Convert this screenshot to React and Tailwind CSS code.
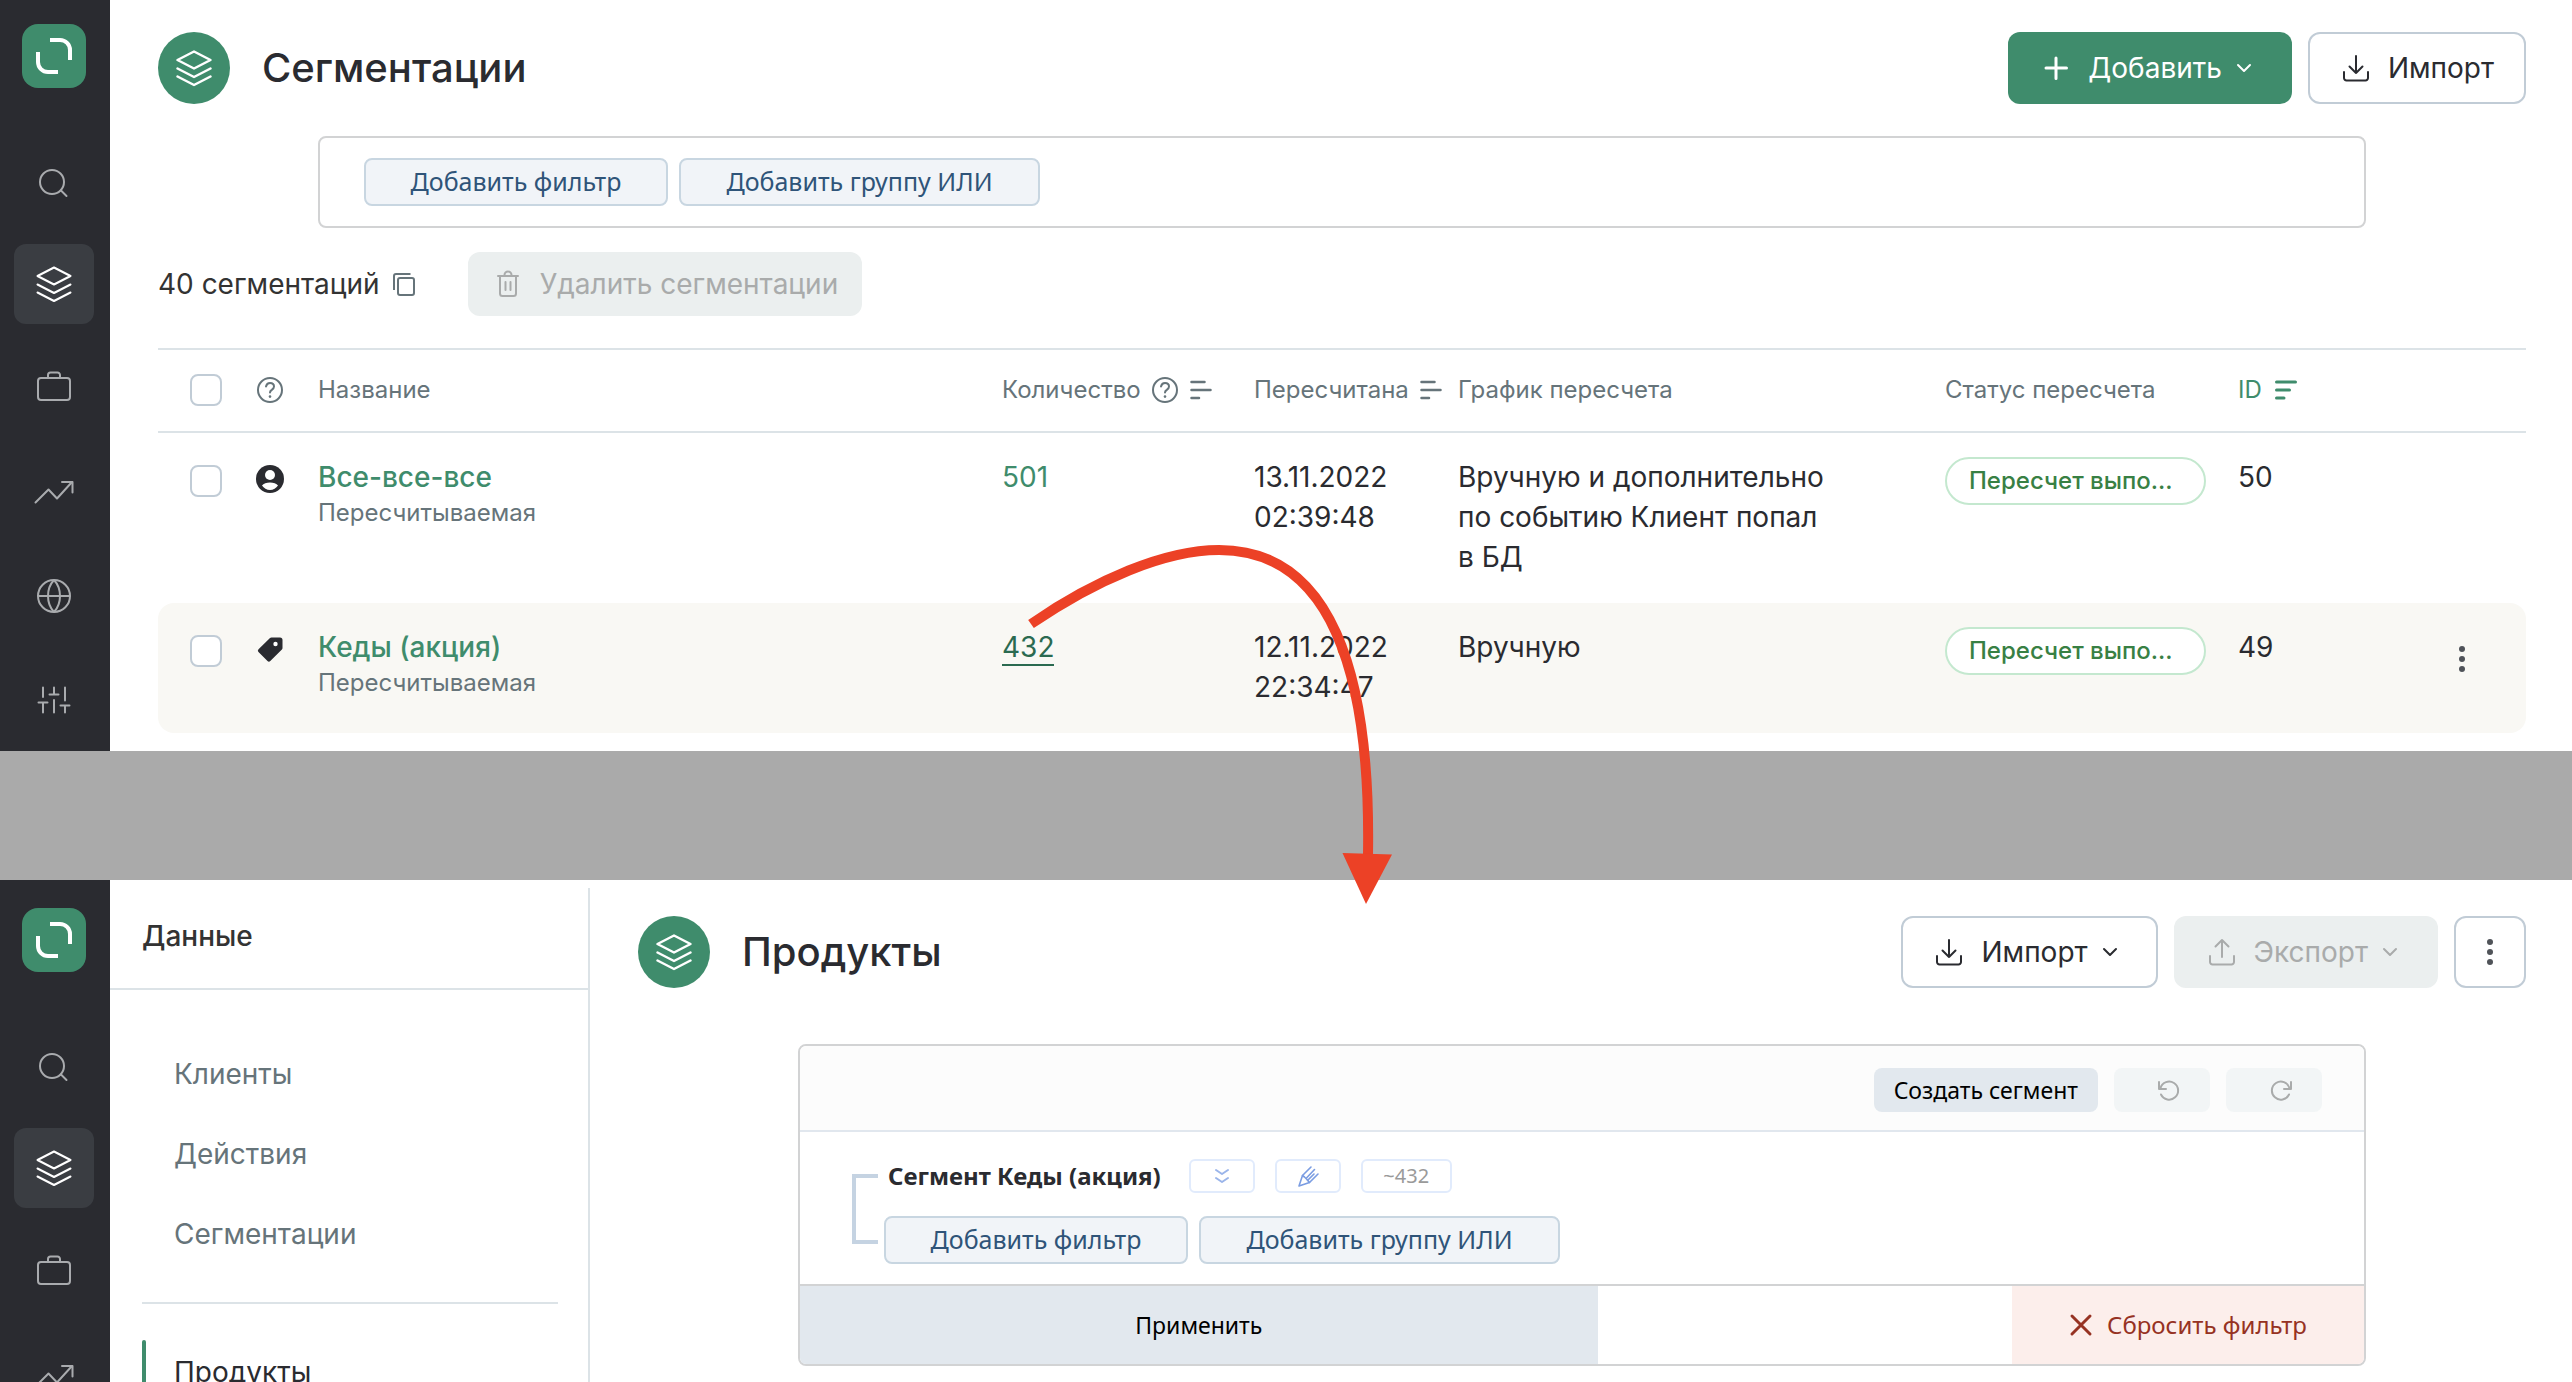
import React, { useState } from 'react';

const LayersIcon = ({ strokeWidth = 2 }) => (
    <svg viewBox="0 0 40 40" className="w-10 h-10" fill="none" stroke="currentColor" strokeWidth={strokeWidth} strokeLinecap="round" strokeLinejoin="round">
        <path d="M20 3.5 36.5 12 20 20.5 3.5 12Z" />
        <path d="M3.5 20.5 20 29l16.5-8.5" />
        <path d="M3.5 28.5 20 37l16.5-8.5" />
    </svg>
);

const SearchIcon = () => (
    <svg viewBox="0 0 40 40" className="w-10 h-10" fill="none" stroke="currentColor" strokeWidth="2" strokeLinecap="round">
        <circle cx="18" cy="22" r="12" />
        <path d="m27 30.5 5.5 5.5" />
    </svg>
);

const BriefcaseIcon = () => (
    <svg viewBox="0 0 40 40" className="w-10 h-10" fill="none" stroke="currentColor" strokeWidth="2">
        <rect x="4" y="10" width="32" height="22" rx="3" />
        <path d="M14 10V7a2.5 2.5 0 0 1 2.5-2.5h7A2.5 2.5 0 0 1 26 7v3" />
    </svg>
);

const TrendIcon = () => (
    <svg viewBox="0 0 40 40" className="w-10 h-10" fill="none" stroke="currentColor" strokeWidth="2" strokeLinecap="round" strokeLinejoin="round">
        <path d="M1.5 30.5 14.5 17.5 23 26.5 38 10" />
        <path d="M28 10h10.5v10.5" />
    </svg>
);

const GlobeIcon = () => (
    <svg viewBox="0 0 40 40" className="w-10 h-10" fill="none" stroke="currentColor" strokeWidth="2">
        <circle cx="20" cy="20" r="16" />
        <path d="M4 20h32M20 4c-8 8.5-8 23.5 0 32M20 4c8 8.5 8 23.5 0 32" />
    </svg>
);

const SlidersIcon = () => (
    <svg viewBox="0 0 40 40" className="w-10 h-10" fill="none" stroke="currentColor" strokeWidth="2" strokeLinecap="round">
        <path d="M9 7.5v9.5M4.5 22.5h9M9 22.5v10" />
        <path d="M20 7.5v7M15.5 14.5h9M20 20v12.5" />
        <path d="M31 7.5v13M26.5 25.5h9M31 25.5v7" />
    </svg>
);

const LogoIcon = () => (
    <svg viewBox="0 0 64 64" className="w-16 h-16" fill="none" stroke="#fff" strokeWidth="4">
        <path d="M28 16h10a10 10 0 0 1 10 10v10" />
        <path d="M16 28v10a10 10 0 0 0 10 10h10" />
    </svg>
);

const DownloadIcon = () => (
    <svg viewBox="0 0 32 32" className="w-8 h-8" fill="none" stroke="currentColor" strokeWidth="2" strokeLinecap="round" strokeLinejoin="round">
        <path d="M16 4v17M9.5 14.5 16 21l6.5-6.5" />
        <path d="M4 20v6a2.5 2.5 0 0 0 2.5 2.5h19A2.5 2.5 0 0 0 28 26v-6" />
    </svg>
);

const UploadIcon = () => (
    <svg viewBox="0 0 32 32" className="w-8 h-8" fill="none" stroke="currentColor" strokeWidth="2" strokeLinecap="round" strokeLinejoin="round">
        <path d="M16 21V4M9.5 10.5 16 4l6.5 6.5" />
        <path d="M4 20v6a2.5 2.5 0 0 0 2.5 2.5h19A2.5 2.5 0 0 0 28 26v-6" />
    </svg>
);

const ChevronIcon = () => (
    <svg viewBox="0 0 32 32" className="w-8 h-8" fill="none" stroke="currentColor" strokeWidth="2" strokeLinecap="round" strokeLinejoin="round">
        <path d="m10 13 6 6 6-6" />
    </svg>
);

const PlusIcon = () => (
    <svg viewBox="0 0 32 32" className="w-8 h-8" stroke="currentColor" strokeWidth="3" strokeLinecap="round">
        <path d="M16 6v20.5M6 16h20.5" />
    </svg>
);

const TrashIcon = () => (
    <svg viewBox="0 0 32 32" className="w-8 h-8" fill="none" stroke="currentColor" strokeWidth="2" strokeLinecap="round">
        <path d="M6 8h20M12.5 8V7a3.5 3.5 0 0 1 7 0v1" />
        <path d="M8 8v17.5A2.5 2.5 0 0 0 10.5 28h11a2.5 2.5 0 0 0 2.5-2.5V8M13.5 14v8M18.5 14v8" />
    </svg>
);

const CopyIcon = () => (
    <svg viewBox="0 0 24 24" className="w-6 h-6" fill="none" stroke="currentColor" strokeWidth="2">
        <rect x="6" y="6" width="16" height="17" rx="2" />
        <path d="M2 18V4a2 2 0 0 1 2-2h14.5" />
    </svg>
);

const HelpIcon = () => (
    <svg viewBox="0 0 28 28" className="w-7 h-7 shrink-0" fill="none" stroke="currentColor" strokeWidth="2" strokeLinecap="round">
        <circle cx="14" cy="14" r="12" />
        <path d="M10 10.5C10.5 8.2 12 7 14 7c2.3 0 4 1.5 4 3.5 0 1.7-1 2.5-2.2 3.4-1.2.8-1.8 1.4-1.8 2.6" />
        <path d="M14 20.5v.1" strokeWidth="2.6" />
    </svg>
);

const SortIcon = ({ active = false }) => (
    <svg viewBox="0 0 24 24" className="w-6 h-6 shrink-0" stroke="currentColor" strokeWidth={active ? 3 : 2.5} strokeLinecap="round">
        <path d={active ? 'M2.5 4h19M2.5 12h13M2.5 20h7.5' : 'M2.5 4h13M2.5 12h19M2.5 20h7.5'} />
    </svg>
);

const PersonIcon = () => (
    <svg viewBox="0 0 28 28" className="w-7 h-7">
        <circle cx="14" cy="14" r="14" fill="currentColor" />
        <circle cx="14" cy="10" r="5" fill="#fff" />
        <path d="M6 20.5c1.5-2 4.5-3 8-3s6.5 1 8 3c-1.8 2.7-4.7 4.5-8 4.5s-6.200-1.800-8-4.500Z" fill="#fff" />
    </svg>
);

const TagIcon = () => (
    <svg viewBox="0 0 28 28" className="w-7 h-7">
        <path d="M15.5 2.500h8.500a2.500 2.500 0 0 1 2.500 2.500v8a2 2 0 0 1-.6 1.500L14.300 26a2 2 0 0 1-2.800 0L2.500 17a2 2 0 0 1 0-2.800L14 3.100a2 2 0 0 1 1.500-.6Z" fill="currentColor" />
        <circle cx="19.5" cy="9" r="2.2" fill="#fff" />
    </svg>
);

const DotsIcon = () => (
    <svg viewBox="0 0 32 32" className="w-8 h-8" fill="currentColor">
        <circle cx="16" cy="6" r="3" />
        <circle cx="16" cy="16" r="3" />
        <circle cx="16" cy="26" r="3" />
    </svg>
);

const RotateIcon = ({ redo = false }) => (
    <svg viewBox="0 0 24 24" className="w-6 h-6" fill="none" stroke="currentColor" strokeWidth="2" strokeLinecap="round" strokeLinejoin="round">
        {redo ? (
            <>
                <path d="M22 4v7h-7" />
                <path d="M20.5 10A9 9 0 1 0 20 16.5" />
            </>
        ) : (
            <>
                <path d="M2 4v7h7" />
                <path d="M3.5 10A9 9 0 1 1 4 16.5" />
            </>
        )}
    </svg>
);

const DoubleChevronIcon = () => (
    <svg viewBox="0 0 20 20" className="w-5 h-5" fill="none" stroke="currentColor" strokeWidth="2" strokeLinecap="round" strokeLinejoin="round">
        <path d="m4 4 6 4 6-4M4 12l6 4 6-4" />
    </svg>
);

const PencilIcon = () => (
    <svg viewBox="0 0 24 24" className="w-6 h-6" fill="none" stroke="currentColor" strokeWidth="1.6" strokeLinecap="round" strokeLinejoin="round">
        <path d="M15 3 6.5 11.5 3 22l10.5-3.5L22 10" />
        <path d="M18.5 5.5 10 14.5M6.5 11.5l2 1.5 1.5 1.5 1.5 1.5 2 2.500" />
        <path d="m18 10-6.5 6.5" />
    </svg>
);

const CloseIcon = () => (
    <svg viewBox="0 0 24 24" className="w-6 h-6" stroke="currentColor" strokeWidth="3" strokeLinecap="round">
        <path d="m3 3 18 18M21 3 3 21" />
    </svg>
);

const navItems = [
    { label: 'Поиск', Icon: SearchIcon },
    { label: 'Данные', Icon: LayersIcon, active: true },
    { label: 'Кампании', Icon: BriefcaseIcon },
    { label: 'Отчеты', Icon: TrendIcon },
    { label: 'Сайт', Icon: GlobeIcon },
    { label: 'Настройки', Icon: SlidersIcon }
];

const segments = [
    {
        id: 50,
        name: 'Все-все-все',
        Icon: PersonIcon,
        count: 501,
        date: '13.11.2022',
        time: '02:39:48',
        schedule: 'Вручную и дополнительно по событию Клиент попал в БД'
    },
    {
        id: 49,
        name: 'Кеды (акция)',
        Icon: TagIcon,
        count: 432,
        date: '12.11.2022',
        time: '22:34:47',
        schedule: 'Вручную',
        hovered: true
    }
];

const Sidebar = ({ className }) => (
    <nav className={`w-[110px] shrink-0 bg-[#2a2b30] pr-0.5 flex flex-col items-center text-[#a9abae] ${className}`}>
        <a href="#home" aria-label="Главная" className="mb-[52px] rounded-2xl bg-[#3f8c6c]">
            <LogoIcon />
        </a>
        <div className="flex flex-col gap-6">
            {navItems.map(({ label, Icon, active }) => (
                <a
                    key={label}
                    href="#nav"
                    aria-label={label}
                    className={`w-20 h-20 rounded-xl flex items-center justify-center ${active ? 'bg-[#3a3d42] text-white' : ''}`}
                >
                    <Icon />
                </a>
            ))}
        </div>
    </nav>
);

const PageTitle = ({ children }) => (
    <div className="flex items-center gap-8">
        <span className="w-18 h-18 rounded-full bg-[#3f8c6c] text-white flex items-center justify-center">
            <LayersIcon strokeWidth={2.5} />
        </span>
        <h1 className="text-[40px] leading-[48px] font-medium">{children}</h1>
    </div>
);

const outlineButton = 'h-18 rounded-xl border-2 border-[#c1ccd6] bg-white flex items-center';

const FilterButtons = () => (
    <div className="flex gap-[11px] text-[25px] font-['Noto_Sans',sans-serif] text-[#2f5479]">
        <button className="h-12 w-[304px] rounded-lg border-2 border-[#c8d6e1] bg-[#f1f4f8]">Добавить фильтр</button>
        <button className="h-12 w-[361px] rounded-lg border-2 border-[#c8d6e1] bg-[#f1f4f8]">Добавить группу ИЛИ</button>
    </div>
);

const Checkbox = ({ label, ...props }) => (
    <input
        type="checkbox"
        aria-label={label}
        className="block w-8 h-8 appearance-none rounded-lg border-2 border-[#c1ccd6] bg-white checked:bg-[#3f8c6c]"
        {...props}
    />
);

const SegmentsTable = () => {
    const [selected, setSelected] = useState([]);

    const toggle = (id) => {
        setSelected(selected.includes(id) ? selected.filter((s) => s !== id) : [...selected, id]);
    };

    const toggleAll = () => {
        setSelected(selected.length === segments.length ? [] : segments.map((s) => s.id));
    };

    return (
        <table className="mt-8 w-full table-fixed border-separate border-spacing-0 text-left">
            <colgroup>
                <col className="w-[98px]" />
                <col className="w-[62px]" />
                <col />
                <col className="w-[252px]" />
                <col className="w-[204px]" />
                <col className="w-[487px]" />
                <col className="w-[293px]" />
                <col className="w-[160px]" />
                <col className="w-[128px]" />
            </colgroup>
            <thead>
                <tr className="text-2xl text-[#66747a] [&>th]:h-[85px] [&>th]:border-y-2 [&>th]:border-[#dce3e7] [&>th]:pb-0.5 [&>th]:font-normal">
                    <th className="pl-8">
                        <Checkbox label="Выбрать все" checked={selected.length === segments.length} onChange={toggleAll} />
                    </th>
                    <th><HelpIcon /></th>
                    <th>Название</th>
                    <th>
                        <div className="flex items-center gap-2.5">Количество <HelpIcon /> <SortIcon /></div>
                    </th>
                    <th>
                        <div className="flex items-center gap-2.5">Пересчитана <SortIcon /></div>
                    </th>
                    <th>График пересчета</th>
                    <th>Статус пересчета</th>
                    <th>
                        <div className="flex items-center gap-3 text-[#3f8c6c]">ID <SortIcon active /></div>
                    </th>
                    <th></th>
                </tr>
            </thead>
            <tbody>
                {segments.map(({ id, name, Icon, count, date, time, schedule, hovered }) => (
                    <tr
                        key={id}
                        className={`align-top text-[28px] leading-10 [&>td]:pt-6 [&>td]:pb-[26px] ${hovered ? '[&>td]:bg-[#f9f8f4]' : ''}`}
                    >
                        <td className="rounded-l-2xl pl-8">
                            <div className="pt-2">
                                <Checkbox label={name} checked={selected.includes(id)} onChange={() => toggle(id)} />
                            </div>
                        </td>
                        <td>
                            <div className="pt-2"><Icon /></div>
                        </td>
                        <td>
                            <a href="#segment" className="block font-medium text-[#3f8c6c]">{name}</a>
                            <div className="text-2xl leading-8 text-[#66747a]">Пересчитываемая</div>
                        </td>
                        <td>
                            <a href="#products" className={hovered ? 'border-b-2 border-[#2b6a50] text-[#2b6a50]' : 'text-[#3f8c6c]'}>
                                {count}
                            </a>
                        </td>
                        <td>{date}<br />{time}</td>
                        <td className="pr-[104px]">{schedule}</td>
                        <td>
                            <span className="flex h-12 w-[261px] items-center rounded-full border-2 border-[#c4e8cf] bg-white px-[22px] text-2xl font-medium text-[#388044]">
                                Пересчет выпо...
                            </span>
                        </td>
                        <td>{id}</td>
                        <td className="rounded-r-2xl pr-8">
                            {hovered && (
                                <button aria-label="Действия" className="ml-auto flex h-16 w-16 items-center justify-center text-[#505359]">
                                    <DotsIcon />
                                </button>
                            )}
                        </td>
                    </tr>
                ))}
            </tbody>
        </table>
    );
};

const SegmentsPage = () => (
    <section className="flex shrink-0 bg-white">
        <Sidebar className="pt-6 pb-[11px]" />
        <main className="min-w-0 flex-1 pt-8 pr-[46px] pl-12">
            <header className="flex items-center justify-between">
                <PageTitle>Сегментации</PageTitle>
                <div className="flex gap-4 text-[28px]">
                    <button className="h-18 rounded-xl bg-[#3f8c6c] px-8 text-white flex items-center">
                        <PlusIcon />
                        <span className="ml-4 mr-1.5">Добавить</span>
                        <ChevronIcon />
                    </button>
                    <button className={`${outlineButton} gap-4 px-[30px]`}>
                        <DownloadIcon /> Импорт
                    </button>
                </div>
            </header>

            <div className="mx-40 mt-8 rounded-lg border-2 border-[#d2d3d4] px-11 py-5">
                <FilterButtons />
            </div>

            <div className="mt-6 flex items-center text-[28px]">
                <span className="text-[#333]">40 сегментаций</span>
                <button aria-label="Скопировать" className="ml-3 text-[#66747a]"><CopyIcon /></button>
                <button disabled className="ml-[52px] flex h-16 items-center gap-4 rounded-xl bg-[#ebefef] px-6 text-[#a9abab]">
                    <TrashIcon /> Удалить сегментации
                </button>
            </div>

            <SegmentsTable />
        </main>
    </section>
);

const DataMenu = () => (
    <aside className="mt-2 w-[480px] shrink-0 border-r-2 border-[#dce3e7] text-[28px]">
        <h2 className="flex h-[102px] items-center border-b-2 border-[#dce3e7] px-8 pb-1 font-medium text-[#333]">Данные</h2>
        <ul className="mt-11 text-[#66747a]">
            {['Клиенты', 'Действия', 'Сегментации'].map((item) => (
                <li key={item}>
                    <a href="#data" className="flex h-20 items-center pl-16">{item}</a>
                </li>
            ))}
        </ul>
        <hr className="ml-8 mr-[30px] mt-7 border-t-2 border-[#dce3e7]" />
        <a href="#products" className="mx-8 mt-9 flex h-16 items-center">
            <span className="h-16 w-1 rounded-full bg-[#3f8c6c]"></span>
            <span className="ml-7">Продукты</span>
        </a>
    </aside>
);

const chip = 'flex items-center justify-center h-[34px] rounded-md border-2 border-[#e1ebfc]';

const ProductFilter = () => (
    <div className="mt-14 mx-40 overflow-hidden rounded-lg border-2 border-[#d2d3d4] font-['Noto_Sans',sans-serif]">
        <div className="flex justify-end gap-4 border-b-2 border-[#e1e7ee] bg-[#fcfcfc] pt-[22px] pr-[42px] pb-[18px]">
            <button className="h-11 rounded-lg bg-[#e2e8ee] px-5 text-[23px] text-black">Создать сегмент</button>
            <button disabled aria-label="Отменить" className="flex h-11 w-24 items-center justify-center rounded-lg bg-[#f2f5f6] pl-3.5 text-[#a9abab]">
                <RotateIcon />
            </button>
            <button disabled aria-label="Повторить" className="flex h-11 w-24 items-center justify-center rounded-lg bg-[#f2f5f6] pl-3.5 text-[#a9abab]">
                <RotateIcon redo />
            </button>
        </div>
        <div className="flex gap-1.5 py-5 pl-[52px]">
            <div className="mt-[22px] h-[70px] w-[26px] border-4 border-r-0 border-[#c5d3e2]"></div>
            <div>
                <div className="mb-4 flex h-12 items-center gap-5 pl-1">
                    <span className="mr-2 text-2xl font-bold">Сегмент Кеды (акция)</span>
                    <button aria-label="Развернуть" className={`${chip} w-[66px] text-[#9bb5ea]`}><DoubleChevronIcon /></button>
                    <button aria-label="Изменить" className={`${chip} w-[66px] text-[#7b9de2]`}><PencilIcon /></button>
                    <span className={`${chip} w-[91px] text-xl text-[#9a9a9a]`}>~432</span>
                </div>
                <FilterButtons />
            </div>
        </div>
        <div className="flex h-20 border-t-2 border-[#d2d3d4]">
            <button className="w-[51%] bg-[#e2e8ee] text-[23px] text-black">Применить</button>
            <button className="ml-auto flex w-[352px] items-center justify-center gap-3.5 bg-[#fceeeb] text-2xl text-[#963223]">
                <CloseIcon /> Сбросить фильтр
            </button>
        </div>
    </div>
);

const ProductsPage = () => (
    <section className="flex min-h-0 flex-1 overflow-hidden bg-white">
        <Sidebar className="pt-7" />
        <DataMenu />
        <main className="min-w-0 flex-1 pt-9 pr-[46px] pl-12">
            <header className="flex items-center justify-between">
                <PageTitle>Продукты</PageTitle>
                <div className="flex gap-4 text-[28px]">
                    <button className={`${outlineButton} px-[30px]`}>
                        <DownloadIcon />
                        <span className="ml-4 mr-1.5">Импорт</span>
                        <ChevronIcon />
                    </button>
                    <button disabled className="h-18 rounded-xl bg-[#ebefef] px-8 text-[#a9abab] flex items-center">
                        <UploadIcon />
                        <span className="ml-4 mr-1.5">Экспорт</span>
                        <ChevronIcon />
                    </button>
                    <button aria-label="Еще" className={`${outlineButton} w-18 justify-center text-[#505359]`}>
                        <DotsIcon />
                    </button>
                </div>
            </header>
            <ProductFilter />
        </main>
    </section>
);

// leads from the "432" counter down to the filtered products page
const TransitionArrow = () => (
    <svg viewBox="0 0 380 370" className="pointer-events-none absolute top-[540px] left-[1020px] h-[370px] w-[380px]">
        <path d="M11 84C75 40 145 10 199 10 310 10 351 130 348 315" fill="none" stroke="#ec4126" strokeWidth="10" />
        <path d="M322.5 313 372 314.5 346 364Z" fill="#ec4126" />
    </svg>
);

const App = () => (
    <div className="relative flex h-screen flex-col overflow-hidden bg-[#aaaaaa] font-['Inter',sans-serif] text-[#2a2b30]">
        <SegmentsPage />
        <div className="h-[129px] shrink-0"></div>
        <ProductsPage />
        <TransitionArrow />
    </div>
);

export default App;
